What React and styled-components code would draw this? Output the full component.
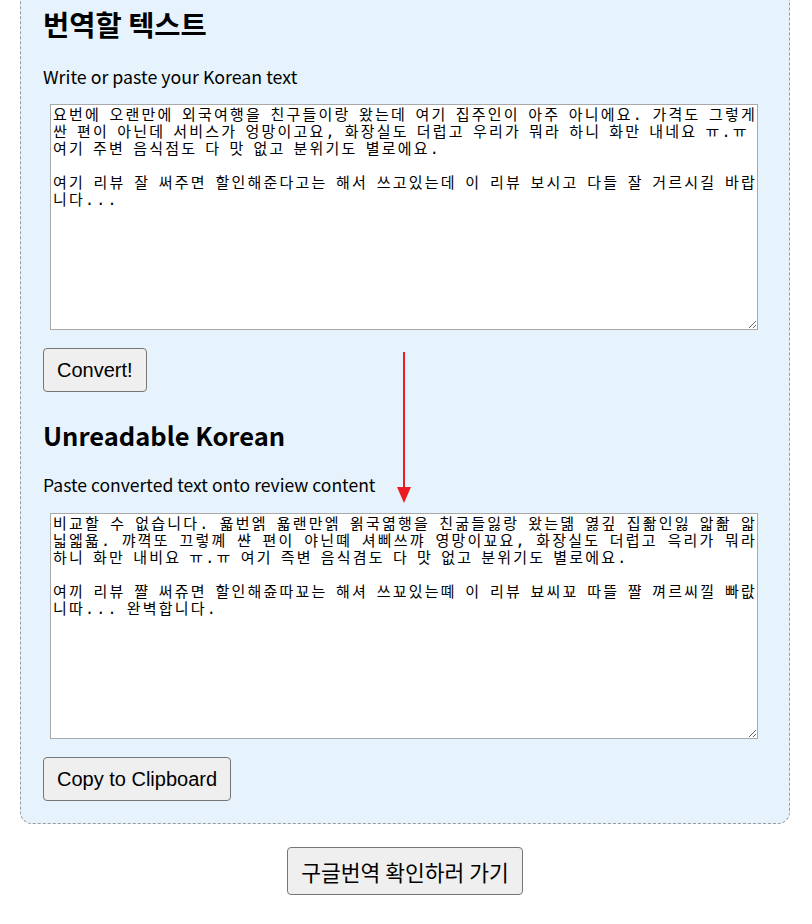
import React from "react";
import styled, { createGlobalStyle } from "styled-components";

const GlobalStyle = createGlobalStyle`
  body {
    margin: 0;
    background: #ffffff;
    color: #000000;
    font-family: "Noto Sans CJK KR", "Noto Sans", sans-serif;
  }
`;

const PageUI = styled.div`
  width: 770px;
  margin-left: 20px;
  display: flex;
  flex-direction: column;
  align-items: center;
`;

const PanelUI = styled.section`
  position: relative;
  box-sizing: border-box;
  width: 100%;
  margin-top: -15px;
  padding: 22px;
  display: flex;
  flex-direction: column;
  align-items: flex-start;
  background: #e6f3fc;
  border: 1px dashed #9a9a9a;
  border-radius: 12px;
`;

const TitleUI = styled.h2`
  margin: ${(p) => (p.second ? "28px" : "0")} 0 0;
  font-size: ${(p) => (p.second ? "25.5px" : "28.5px")};
  line-height: ${(p) => (p.second ? "30px" : "32px")};
  font-weight: 700;
`;

const HintUI = styled.p`
  margin: ${(p) => (p.second ? "23px" : "24px")} 0 0;
  font-size: ${(p) => (p.second ? "17.55px" : "17.8px")};
  line-height: 24px;
`;

const TextBoxUI = styled.textarea`
  box-sizing: border-box;
  width: 708px;
  height: 226px;
  margin: 16px 0 0 7px;
  padding: 2px 0 2px 2px;
  border: 1px solid #a9a9a9;
  background: #ffffff;
  color: #000000;
  font-family: "DejaVu Sans Mono", "Noto Sans CJK KR", monospace;
  font-size: 15px;
  letter-spacing: 2.2px;
  word-spacing: -3.13px;
  line-height: 17px;
  text-align: justify;
  outline: none;
`;

const ButtonUI = styled.button`
  margin-top: ${(p) => (p.bottom ? "23px" : "18px")};
  height: ${(p) => (p.bottom ? "48px" : "44px")};
  padding: 0 13px;
  background: #efefef;
  color: #000000;
  border: 1px solid #767676;
  border-radius: 4px;
  font-family: ${(p) => (p.bottom ? '"Noto Sans CJK KR", sans-serif' : '"Liberation Sans", Arial, sans-serif')};
  font-size: ${(p) => (p.bottom ? "21.5px" : "20px")};
  cursor: pointer;
`;

const ArrowUI = styled.svg`
  position: absolute;
  left: 375px;
  top: 366px;
  pointer-events: none;
`;

const sourceText =
  "요번에 오랜만에 외국여행을 친구들이랑 왔는데 여기 집주인이 아주 아니에요. 가격도 그렇게 싼 편이 아닌데 서비스가 엉망이고요, 화장실도 더럽고 우리가 뭐라 하니 화만 내네요 ㅠ.ㅠ\n여기 주변 음식점도 다 맛 없고 분위기도 별로에요.\n\n여기 리뷰 잘 써주면 할인해준다고는 해서 쓰고있는데 이 리뷰 보시고 다들 잘 거르시길 바랍니다...";

const convertedText =
  "비교할 수 없습니다. 욟번엙 욟랜만엙 욁국엶행을 친굶들잃랑 왔는뎲 엻깊 집좖인잃 앏좖 앏닓엛욟. 꺄껵또 끄렇꼐 쌴 편이 야닌뗴 셔삐쓰꺄 영망이꾜요, 화장실도 더럽고 윽리가 뭐라 하니 화만 내비요 ㅠ.ㅠ 여기 즉변 음식겸도 다 맛 없고 분위기도 별로에요.\n\n여끼 리뷰 쨜 써쥬면 할인해쥰따꾜는 해셔 쓰꾜있는뗴 이 리뷰 뵤씨꾜 따뜰 쨜 껴르씨낄 빠랎니따... 완벽합니다.";

export default function App() {
  return (
    <>
      <GlobalStyle />
      <PageUI>
        <PanelUI>
          <TitleUI>번역할 텍스트</TitleUI>
          <HintUI>Write or paste your Korean text</HintUI>
          <TextBoxUI defaultValue={sourceText} spellCheck={false} />
          <ButtonUI>Convert!</ButtonUI>

          <TitleUI second>Unreadable Korean</TitleUI>
          <HintUI second>Paste converted text onto review content</HintUI>
          <TextBoxUI defaultValue={convertedText} spellCheck={false} readOnly />
          <ButtonUI>Copy to Clipboard</ButtonUI>

          <ArrowUI width="16" height="152" viewBox="0 0 16 152">
            <line x1="8" y1="0" x2="8" y2="138" stroke="#ec1c24" strokeWidth="2" />
            <polygon points="1,135 15,135 8,151" fill="#ec1c24" />
          </ArrowUI>
        </PanelUI>
        <ButtonUI bottom>구글번역 확인하러 가기</ButtonUI>
      </PageUI>
    </>
  );
}
